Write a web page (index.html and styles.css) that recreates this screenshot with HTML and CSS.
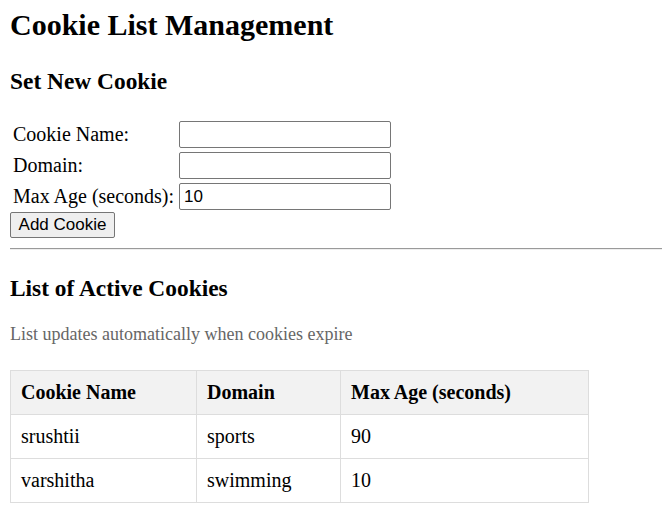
FILE: index.html
```html
<!DOCTYPE html>
<html>
<head>
<meta charset="utf-8">
<title>Cookie List Management</title>
<link rel="stylesheet" href="styles.css">
</head>
<body>
<h1 class="title">Cookie List Management</h1>
<h2 class="section">Set New Cookie</h2>
<form class="cookie-form">
  <table class="form-table">
    <tr><td class="label">Cookie Name:</td><td><input class="field" type="text"></td></tr>
    <tr><td class="label">Domain:</td><td><input class="field" type="text"></td></tr>
    <tr><td class="label">Max Age (seconds):</td><td><input class="field" type="text" value="10"></td></tr>
  </table>
  <button class="add-btn" type="button">Add Cookie</button>
</form>
<hr class="divider">
<h2 class="section section-list">List of Active Cookies</h2>
<p class="note">List updates automatically when cookies expire</p>
<table class="cookie-table">
  <thead>
    <tr><th class="c1">Cookie Name</th><th class="c2">Domain</th><th class="c3">Max Age (seconds)</th></tr>
  </thead>
  <tbody>
    <tr><td>srushtii</td><td>sports</td><td>90</td></tr>
    <tr><td>varshitha</td><td>swimming</td><td>10</td></tr>
  </tbody>
</table>
</body>
</html>
```

FILE: styles.css
```css
html, body {
  margin: 0;
  padding: 0;
  background: #fff;
}
body {
  padding: 0 0 0 10px;
  font-family: "Liberation Serif", "Times New Roman", serif;
  color: #000;
}
.title {
  font-size: 30px;
  font-weight: bold;
  margin: 8px 0 0;
  line-height: 34px;
}
.section {
  font-size: 23.4px;
  font-weight: bold;
  margin: 25px 0 0;
  line-height: 28px;
}
.cookie-form {
  margin: 0;
}
.form-table {
  margin-top: 23px;
  border-spacing: 2px;
  font-size: 20px;
}
.form-table td {
  padding: 1px;
}
.form-table .label {
  padding-right: 2px;
}
.field {
  box-sizing: border-box;
  width: 212px;
  height: 27px;
  margin: 0;
  padding: 1px 4px;
  font-family: "Liberation Sans", Arial, sans-serif;
  font-size: 17px;
  border: 1px solid #767676;
  border-radius: 2px;
}
.add-btn {
  display: block;
  box-sizing: border-box;
  height: 26px;
  width: 105px;
  margin: -1px 0 0;
  padding: 0 6px;
  font-family: "Liberation Sans", Arial, sans-serif;
  font-size: 17px;
  background: #efefef;
  border: 1px solid #767676;
  border-radius: 2px;
  color: #000;
}
.divider {
  margin: 10px 0 0;
  border: 0;
  border-top: 1px solid #9a9a9a;
  border-bottom: 1px solid #eee;
  height: 0;
}
.section-list {
  margin-top: 24px;
}
.note {
  margin: 22px 0 0;
  font-size: 18px;
  color: #666;
}
.cookie-table {
  margin-top: 25px;
  border-collapse: collapse;
  font-size: 20px;
}
.cookie-table th,
.cookie-table td {
  border: 1px solid #ddd;
  padding: 10px;
  line-height: 23px;
  text-align: left;
}
.cookie-table th {
  background: #f2f2f2;
  font-weight: bold;
}
.c1 { width: 165px; }
.c2 { width: 123px; }
.c3 { width: 227px; }
```
